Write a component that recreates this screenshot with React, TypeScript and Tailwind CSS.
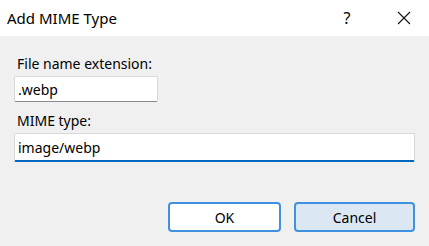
export default function App() {
  const font = { fontFamily: '"Noto Sans", "Open Sans", sans-serif' };
  return (
    <div className="w-[429px] h-[246px] flex flex-col bg-[#f0f0f0] text-black" style={font}>
      <div className="h-[36px] bg-white flex items-center shrink-0">
        <div className="pl-[7px] text-[15px] flex-1">Add MIME Type</div>
        <div className="w-[46px] text-center text-[16px] mr-[11px]">?</div>
        <div className="w-[46px] flex items-center justify-center mr-[2px]">
          <svg width="14" height="14" viewBox="0 0 14 14" stroke="#111" strokeWidth="1.1" fill="none">
            <path d="M1 1L13 13M13 1L1 13" />
          </svg>
        </div>
      </div>
      <div className="flex flex-col pl-[14px] pr-[14px] pt-[18px]">
        <div className="text-[14px] leading-[20px] pl-[3px]">File name extension:</div>
        <div className="mt-[2px] w-[144px] h-[26px] bg-white border border-[#d9d9d9] border-b-[#8a8a8a] rounded-[2px] flex items-center pl-[3px] text-[14px]">
          .webp
        </div>
        <div className="mt-[9px] text-[14px] leading-[20px] pl-[3px]">MIME type:</div>
        <div className="mt-[2px] w-[401px] h-[29px] bg-white border border-[#d9d9d9] border-b-[2px] border-b-[#0067c0] rounded-[2px] flex items-center pl-[3px] text-[14px]">
          image/webp
        </div>
        <div className="flex justify-end gap-[13px] mt-[40px]">
          <button className="w-[113px] h-[30px] bg-white border-2 border-[#3f92e0] rounded-[4px] text-[14px]">OK</button>
          <button className="w-[121px] h-[30px] bg-[#dbe7f3] border-2 border-[#3f92e0] rounded-[4px] text-[14px]">Cancel</button>
        </div>
      </div>
    </div>
  );
}
